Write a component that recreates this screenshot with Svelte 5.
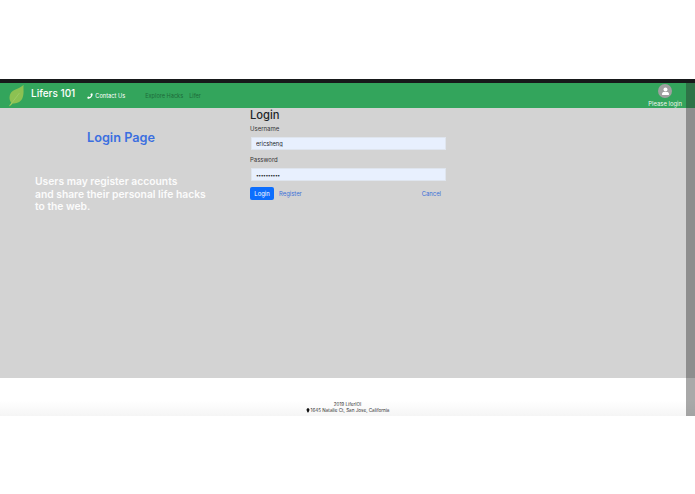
<script lang="ts">
	let username = $state('ericsheng');
	let password = $state('password10');
</script>

<div class="shot">
	<div class="frame">
		<header class="navbar">
			<svg class="leaf" viewBox="0 0 18 24" aria-hidden="true">
				<path d="M16.5 0.5C16 5 17.5 10 15 15.5C13 19.5 8.5 20.5 5 20.5C4 21.5 3 22.8 1.8 23.5L1 22.8C2 21.8 2.8 20.8 3.4 19.6C1 16.5 1 12 3.5 8.5C6.5 4.8 13 4.5 16.5 0.5Z" fill="#8cc152" />
				<path d="M2.5 22L12 9.5" stroke="#a9d271" stroke-width=".6" fill="none" />
			</svg>
			<span class="brand">Lifers 101</span>
			<a class="contact" href="#contact">
				<svg viewBox="0 0 12 12" aria-hidden="true">
					<path d="M8 .6 11.4 1.4C11.6 7 7 11.6 1.4 11.4L.6 8 3.8 6.8 4.8 8.2C6 7.6 7.6 6 8.2 4.8L6.8 3.8Z" fill="#fff" />
				</svg>
				Contact Us
			</a>
			<nav class="links">
				<a href="#hacks">Explore Hacks</a>
				<a href="#lifer">Lifer</a>
			</nav>
			<div class="user">
				<span class="avatar">
					<svg viewBox="0 0 16 16" aria-hidden="true">
						<circle cx="8" cy="5.2" r="2.9" fill="#fff" />
						<path d="M3 13V11.4C3 9.6 4.4 8.8 6 8.8H10C11.6 8.8 13 9.6 13 11.4V13Z" fill="#fff" />
					</svg>
				</span>
				<span class="user-label">Please login</span>
			</div>
		</header>

		<main class="content">
			<section class="intro">
				<h2>Login Page</h2>
				<p>Users may register accounts<br />and share their personal life hacks<br />to the web.</p>
			</section>
			<form class="login">
				<h3>Login</h3>
				<label for="username">Username</label>
				<input id="username" type="text" bind:value={username} />
				<label for="password">Password</label>
				<input id="password" class="secret" type="password" bind:value={password} />
				<div class="actions">
					<button type="button" class="primary">Login</button>
					<a href="#register">Register</a>
					<a class="cancel" href="#cancel">Cancel</a>
				</div>
			</form>
		</main>

		<footer class="footer">
			<div>2019 LiferIOI</div>
			<div class="address">
				<svg viewBox="0 0 8 12" aria-hidden="true">
					<path d="M4 .5C6 .5 7.5 2 7.5 4C7.5 6.5 5 9.5 4 11.5C3 9.5 .5 6.5 .5 4C.5 2 2 .5 4 .5Z" fill="#111" />
				</svg>
				1645 Natalie Ct, San Jose, California
			</div>
		</footer>

		<div class="scrollbar"></div>
	</div>
</div>

<style>
	:global(body) {
		margin: 0;
		background: #fff;
	}

	.shot {
		width: 695px;
		height: 494px;
		padding-top: 79px;
		box-sizing: border-box;
		overflow: hidden;
		font-family: Inter, "Liberation Sans", sans-serif;
	}

	.frame {
		position: relative;
		border-top: 4px solid #17191a;
		height: 333px;
		display: flex;
		flex-direction: column;
	}

	.navbar {
		height: 25px;
		background: #33a55c;
		display: flex;
		align-items: center;
		padding: 0 13px 0 8px;
		flex: none;
	}

	.leaf {
		width: 17px;
		height: 23px;
		flex: none;
	}

	.brand {
		margin-left: 6px;
		margin-top: -5px;
		color: #fff;
		font-size: 10px;
		font-weight: 500;
	}

	.contact {
		margin-left: 12px;
		display: flex;
		align-items: center;
		gap: 2px;
		color: #fff;
		font-size: 5.7px;
		text-decoration: none;
	}

	.contact svg {
		width: 6px;
		height: 6px;
	}

	.links {
		margin-left: 20px;
		display: flex;
		gap: 6px;
		font-size: 5.6px;
	}

	.links a {
		color: #1e6b3a;
		text-decoration: none;
	}

	.user {
		margin-left: auto;
		display: flex;
		flex-direction: column;
		align-items: center;
		color: #eef7f0;
		font-size: 5.9px;
	}

	.avatar {
		width: 14px;
		height: 14px;
		border-radius: 50%;
		background: #a0a0a0;
		display: flex;
		align-items: center;
		justify-content: center;
	}

	.avatar svg {
		width: 11px;
		height: 11px;
	}

	.user-label {
		margin-top: 2px;
	}

	.content {
		height: 270px;
		flex: none;
		background: #d3d3d3;
		display: flex;
	}

	.intro {
		width: 250px;
		flex: none;
		box-sizing: border-box;
		padding: 22px 0 0 35px;
	}

	.intro h2 {
		margin: 0;
		padding-right: 43px;
		text-align: center;
		color: #3b6fe0;
		font-size: 12.7px;
		font-weight: 600;
	}

	.intro p {
		margin: 30px 0 0;
		color: #fbfbfb;
		font-size: 10.3px;
		font-weight: 600;
		line-height: 12.5px;
		white-space: nowrap;
	}

	.login {
		width: 196px;
		display: flex;
		flex-direction: column;
	}

	.login h3 {
		margin: 0;
		color: #212529;
		font-size: 11.2px;
		font-weight: 500;
		line-height: 14px;
	}

	.login label {
		margin-top: 2px;
		color: #333;
		font-size: 6px;
		line-height: 9px;
	}

	.login input {
		box-sizing: border-box;
		width: 195px;
		height: 13px;
		margin: 4px 0 0 1px;
		padding: 0 4px;
		border: 1px solid #dfe5ee;
		background: #e8f0fe;
		color: #212529;
		font: 5.7px Inter, "Liberation Sans", sans-serif;
		outline: none;
	}

	.login input.secret {
		font-size: 5px;
		letter-spacing: -0.45px;
	}

	.login input + label {
		margin-top: 5px;
	}

	.actions {
		margin-top: 6px;
		display: flex;
		align-items: center;
		font-size: 5.9px;
	}

	.actions a {
		color: #3a6fd8;
		text-decoration: none;
	}

	.primary {
		width: 24px;
		height: 13px;
		margin-right: 5px;
		padding: 0;
		border: none;
		border-radius: 2px;
		background: #0d6efd;
		color: #fff;
		font: 5.9px Inter, "Liberation Sans", sans-serif;
	}

	.cancel {
		margin-left: auto;
		margin-right: 5px;
	}

	.footer {
		flex: 1;
		background: linear-gradient(#fff 60%, #f5f5f5);
		padding-top: 23.5px;
		box-sizing: border-box;
		text-align: center;
		color: #333;
		font-size: 4.6px;
		line-height: 6px;
	}

	.address {
		display: flex;
		justify-content: center;
		align-items: center;
		gap: 1px;
	}

	.address svg {
		width: 4px;
		height: 5px;
	}

	.scrollbar {
		position: absolute;
		top: 0;
		right: 0;
		bottom: 0;
		width: 9px;
		background: rgba(40, 40, 40, 0.4);
	}
</style>
